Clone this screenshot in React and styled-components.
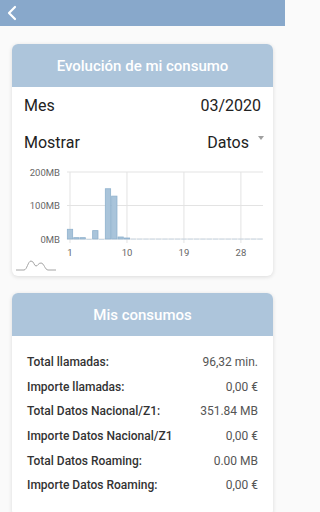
import React from 'react';
import styled, { createGlobalStyle } from 'styled-components';

const GlobalStyle = createGlobalStyle`
  html, body {
    margin: 0;
    padding: 0;
    background: #fafafa;
    font-family: Roboto, "Liberation Sans", sans-serif;
  }
`;

const Page = styled.div`
  width: 285px;
  height: 512px;
  overflow: hidden;
  background: #fafafa;
`;

const TopBar = styled.div`
  height: 26px;
  background: #88a8cb;
  display: flex;
  align-items: center;
  padding-left: 6px;
`;

const Content = styled.div`
  display: flex;
  flex-direction: column;
  gap: 17px;
  padding: 18px 12px 0;
`;

const Card = styled.div`
  background: #fff;
  border-radius: 6px;
  box-shadow: 0 1px 4px rgba(0, 0, 0, 0.13);
  overflow: hidden;
`;

const CardHeader = styled.div`
  height: 43px;
  background: #adc5db;
  color: #fff;
  font-size: 15px;
  font-weight: 500;
  display: flex;
  align-items: center;
  justify-content: center;
`;

const FieldRow = styled.div`
  display: flex;
  align-items: center;
  justify-content: space-between;
  height: 37px;
  padding: 0 12px;
  font-size: 16px;
  color: #222;
`;

const SelectValue = styled.div`
  display: flex;
  align-items: center;
  gap: 9px;
  margin-right: -3px;

  &::after {
    content: '';
    border-left: 3px solid transparent;
    border-right: 3px solid transparent;
    border-top: 4px solid #a0a0a0;
    margin-top: -9px;
  }
`;

const ChartWrap = styled.div`
  display: flex;
  flex-direction: column;
  padding-top: 4px;
`;

const IconRow = styled.div`
  height: 18px;
  padding-left: 4px;
`;

const ConsumosList = styled.div`
  display: flex;
  flex-direction: column;
  padding: 14px 15px 18px;
`;

const ConsumoRow = styled.div`
  display: flex;
  justify-content: space-between;
  align-items: center;
  height: 24.6px;
  font-size: 12px;
`;

const Label = styled.span`
  color: #333;
  font-weight: 500;
`;

const Value = styled.span`
  color: #555;
`;

const days = [29, 4, 4, 0, 25, 0, 150, 128, 6, 3].concat(Array(21).fill(0.6));

const x0 = 58; // day 1 centre, svg coords
const step = 6.33;
const yZero = 74;
const perMB = 67 / 200;

const UsageChart = () => (
  <svg width="261" height="93" viewBox="0 0 261 93">
    {[7, 40.5, 74].map((y) => (
      <line key={y} x1="55" x2="251" y1={y} y2={y} stroke="#e3e3e3" strokeWidth="1" />
    ))}
    {[0, 9, 18, 27].map((d) => (
      <line key={d} x1={x0 + d * step} x2={x0 + d * step} y1="7" y2="78" stroke="#e3e3e3" strokeWidth="1" />
    ))}
    {days.map((v, i) => {
      const h = v * perMB;
      return (
        <rect
          key={i}
          x={x0 + i * step - step / 2 + 0.5}
          y={yZero - h}
          width={step - 1}
          height={Math.max(h, 0.5)}
          fill="#a9c4da"
          stroke="#8fb1cd"
          strokeWidth={h > 1 ? 0.8 : 0}
        />
      );
    })}
    <g fontFamily="Roboto, 'Liberation Sans', sans-serif" fontSize="9.5" fill="#666">
      <text x="48" y="10.5" textAnchor="end">200MB</text>
      <text x="48" y="44" textAnchor="end">100MB</text>
      <text x="48" y="77.5" textAnchor="end">0MB</text>
      {[1, 10, 19, 28].map((d) => (
        <text key={d} x={x0 + (d - 1) * step} y="90.5" textAnchor="middle">{d}</text>
      ))}
    </g>
  </svg>
);

const ChartTypeIcon = () => (
  <svg width="44" height="14" viewBox="0 0 44 14">
    <path
      d="M0 11 H8 C11 11 12 2 15 2 C18 2 18 7 20 7 C22 7 22 4 25 4 C28 4 29 11 32 11 H40"
      fill="none"
      stroke="#9a9a9a"
      strokeWidth="0.9"
    />
  </svg>
);

const consumos = [
  ['Total llamadas:', '96,32 min.'],
  ['Importe llamadas:', '0,00 €'],
  ['Total Datos Nacional/Z1:', '351.84 MB'],
  ['Importe Datos Nacional/Z1', '0,00 €'],
  ['Total Datos Roaming:', '0.00 MB'],
  ['Importe Datos Roaming:', '0,00 €'],
];

export default function App() {
  return (
    <Page>
      <GlobalStyle />
      <TopBar>
        <svg width="12" height="16" viewBox="0 0 12 16">
          <path d="M9 2 L3 8 L9 14" fill="none" stroke="#fff" strokeWidth="2.2" strokeLinecap="round" strokeLinejoin="round" />
        </svg>
      </TopBar>
      <Content>
        <Card>
          <CardHeader>Evolución de mi consumo</CardHeader>
          <FieldRow>
            <span>Mes</span>
            <span>03/2020</span>
          </FieldRow>
          <FieldRow>
            <span>Mostrar</span>
            <SelectValue>Datos</SelectValue>
          </FieldRow>
          <ChartWrap>
            <UsageChart />
            <IconRow>
              <ChartTypeIcon />
            </IconRow>
          </ChartWrap>
        </Card>
        <Card>
          <CardHeader>Mis consumos</CardHeader>
          <ConsumosList>
            {consumos.map(([label, value]) => (
              <ConsumoRow key={label}>
                <Label>{label}</Label>
                <Value>{value}</Value>
              </ConsumoRow>
            ))}
          </ConsumosList>
        </Card>
      </Content>
    </Page>
  );
}
